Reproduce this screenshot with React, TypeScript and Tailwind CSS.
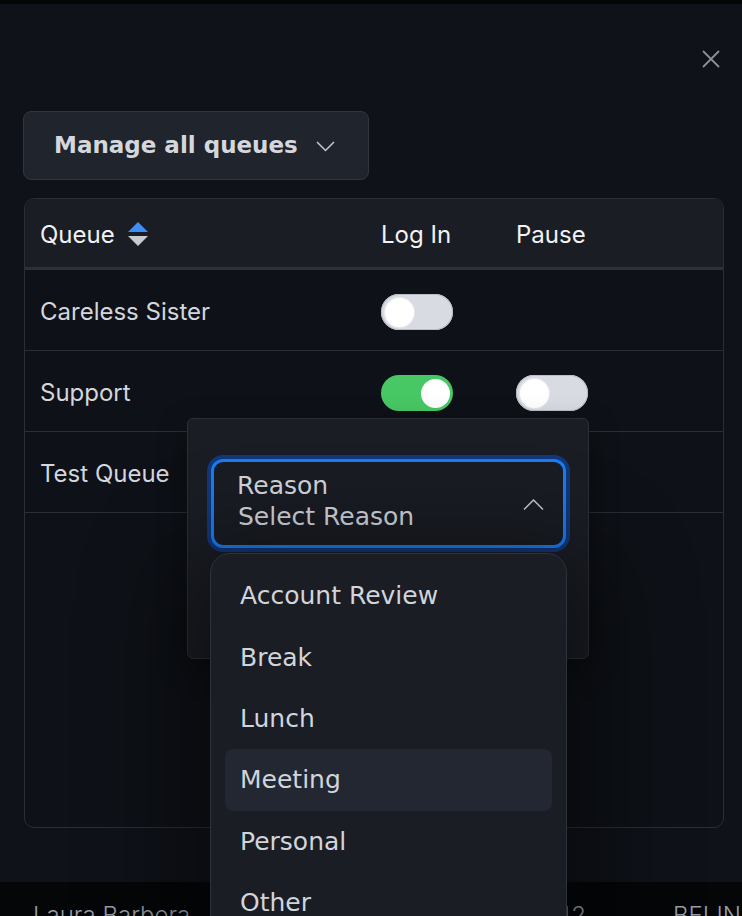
import React from 'react';

const poppins = "font-['DejaVu_Sans',sans-serif]";

function Toggle({ on }: { on: boolean }) {
  return (
    <div
      className={
        on
          ? 'relative h-[36px] w-[72px] rounded-full bg-[#48c864]'
          : 'relative h-[36px] w-[72px] rounded-full bg-[#d8dbe2] shadow-[inset_0_0_0_1px_#b9bdc6]'
      }
    >
      <div
        className={
          on
            ? 'absolute top-[3.5px] left-[40px] h-[29px] w-[29px] rounded-full bg-white'
            : 'absolute top-[3.5px] left-[4px] h-[29px] w-[29px] rounded-full bg-white shadow-[0_0_0_1px_#e6e8ec]'
        }
      />
    </div>
  );
}

const rows = [
  { name: 'Careless Sister', login: false, pause: null as boolean | null },
  { name: 'Support', login: true, pause: false },
  { name: 'Test Queue', login: null as boolean | null, pause: null as boolean | null },
];

const reasons = ['Account Review', 'Break', 'Lunch', 'Meeting', 'Personal', 'Other'];

export default function App() {
  return (
    <div className="flex h-[916px] w-[742px] flex-col overflow-hidden bg-[#050608] font-['Inter',sans-serif]">
      <div className="h-[4px] shrink-0" />

      {/* modal */}
      <div className="relative h-[878px] shrink-0 bg-[#0f1219] pl-[23px]">
        <button className="absolute top-[46px] left-[702px] h-[18px] w-[18px]">
          <svg width="18" height="18" viewBox="0 0 18 18" fill="none">
            <path d="M1 1L17 17M17 1L1 17" stroke="#8a8f98" strokeWidth="1.8" />
          </svg>
        </button>

        <div className="pt-[107px]">
          <button
            className={`flex h-[69px] w-[346px] items-center gap-[18px] rounded-[8px] border border-[#30353e] bg-[#20242c] pl-[30px] text-[23px] font-semibold text-[#d4d7dd] ${poppins}`}
          >
            <span>Manage all queues</span>
            <svg width="19" height="11" viewBox="0 0 19 11" fill="none" className="mt-[2px]">
              <path d="M1 1L9.5 9.5L18 1" stroke="#c5c9d0" strokeWidth="1.5" />
            </svg>
          </button>
        </div>

        {/* table */}
        <div className="relative mt-[18px] ml-px h-[630px] w-[700px] rounded-[10px] border border-[#2a2e36] bg-[#0e1117]">
          <div className="grid h-[71px] grid-cols-[341px_135px_1fr] items-center rounded-t-[10px] border-b-[3px] border-[#2c3038] bg-[#1a1d24] px-[15px] pt-[3px] text-[24px] text-[#f1f2f4]">
            <div className="flex items-center gap-[13px]">
              <span>Queue</span>
              <svg width="20" height="24" viewBox="0 0 20 24" className="-mt-[2px]">
                <path d="M10 0L20 10H0Z" fill="#3d8ff5" />
                <path d="M0 14H20L10 24Z" fill="#c8cbd2" />
              </svg>
            </div>
            <span>Log In</span>
            <span>Pause</span>
          </div>

          {rows.map((r) => (
            <div
              key={r.name}
              className="grid h-[81px] grid-cols-[341px_135px_1fr] items-center border-b border-[#2a2e36] px-[15px] pt-[4px] text-[24px] text-[#d3d6dc]"
            >
              <span>{r.name}</span>
              <div>{r.login !== null && <Toggle on={r.login} />}</div>
              <div>{r.pause !== null && <Toggle on={r.pause} />}</div>
            </div>
          ))}

          {/* pause reason popover */}
          <div className="absolute top-[219px] left-[162px] h-[241px] w-[402px] rounded-[6px] border border-[#2b2f37] bg-[#1a1d24] shadow-[0_10px_30px_rgba(0,0,0,0.35)]">
            <div
              className={`relative mt-[40px] ml-[23px] h-[89px] w-[355px] rounded-[12px] border-[3px] border-[#1a7cf0] bg-[#191c23] pt-[8px] pl-[23px] text-[25px] leading-[31px] text-[#d1d5db] shadow-[0_0_0_4px_#12377a] ${poppins}`}
            >
              <div>Reason</div>
              <div className="pl-px">Select Reason</div>
              <svg
                width="21"
                height="12"
                viewBox="0 0 21 12"
                fill="none"
                className="absolute top-[37px] left-[309px]"
              >
                <path d="M1 10.5L10.5 1L20 10.5" stroke="#c5c9d0" strokeWidth="1.5" />
              </svg>

              {/* options list */}
              <div className="absolute top-[91px] left-[-4px] h-[400px] w-[357px] rounded-t-[20px] border border-[#2e323a] bg-[#1a1d24] px-[14px] pt-[11px] shadow-[0_30px_90px_40px_rgba(0,0,0,0.4)]">
                {reasons.map((item) => (
                  <div
                    key={item}
                    className={
                      item === 'Meeting'
                        ? 'flex h-[61.4px] items-center rounded-[8px] bg-[#222731] px-[15px] text-[25px] text-[#d1d5db]'
                        : 'flex h-[61.4px] items-center px-[15px] text-[25px] text-[#d1d5db]'
                    }
                  >
                    {item}
                  </div>
                ))}
              </div>
            </div>
          </div>
        </div>
      </div>

      {/* page behind the modal */}
      <div className="flex h-[34px] shrink-0 items-start pt-[16px] pl-[33px] text-[24px] font-light whitespace-nowrap text-[#9a9ea6]">
        <span className="w-[400px] shrink-0">Laura Barbera</span>
        <span className="w-[153px] shrink-0 text-right">00:03:42</span>
        <span className="ml-[87px] shrink-0">BELINDA</span>
      </div>
    </div>
  );
}
